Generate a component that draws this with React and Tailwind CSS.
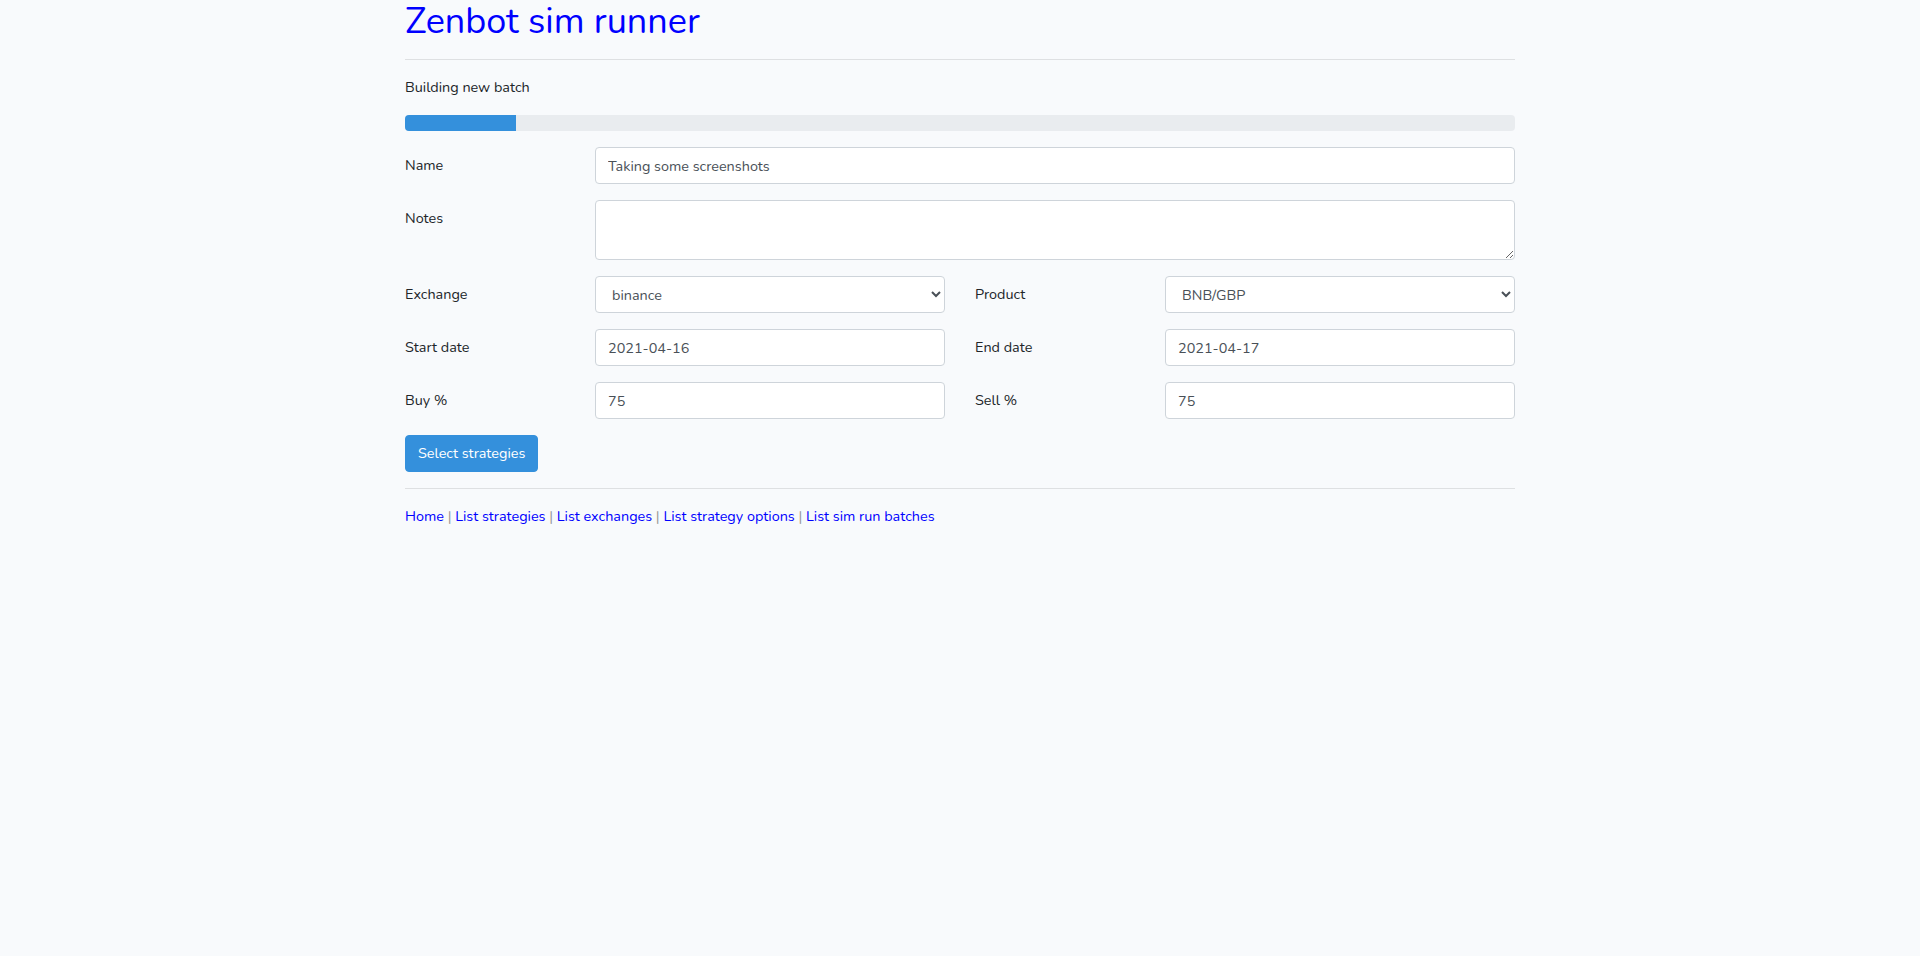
import React from "react";

const font = { fontFamily: "Nunito, Lato, 'Open Sans', sans-serif" };

function Label({ children }) {
  return (
    <label className="block pt-[7px] pb-[7px] text-[14.4px] leading-[1.6] text-[#212529]">
      {children}
    </label>
  );
}

const inputCls =
  "block w-full h-[37px] px-3 py-[6px] text-[14.4px] leading-[1.6] text-[#495057] bg-white border border-[#ced4da] rounded-[4px] outline-none";

export default function App() {
  return (
    <div className="min-h-[956px] bg-[#f8fafc] text-[#212529]" style={font}>
      <div className="w-[1110px] mx-auto">
        <h1 className="text-[36px] leading-[1.2] font-normal text-[#0000ff] m-0">Zenbot sim runner</h1>
        <hr className="mt-4 mb-4 border-0 border-t border-[rgba(0,0,0,0.1)]" />
        <p className="text-[14.4px] leading-[1.6] mb-4">Building new batch</p>
        <div className="h-4 w-full rounded-[4px] bg-[#e9ecef] overflow-hidden mb-4 flex">
          <div className="h-full w-[10%] bg-[#3490dc]" />
        </div>

        <div className="grid grid-cols-12 gap-x-[30px] gap-y-4">
          <div className="col-span-2"><Label>Name</Label></div>
          <div className="col-span-10">
            <input className={inputCls} defaultValue="Taking some screenshots" />
          </div>

          <div className="col-span-2"><Label>Notes</Label></div>
          <div className="col-span-10">
            <textarea rows={2} className="block w-full h-[60px] px-3 py-[6px] text-[14.4px] leading-[1.6] text-[#495057] bg-white border border-[#ced4da] rounded-[4px] outline-none" />
          </div>

          <div className="col-span-2"><Label>Exchange</Label></div>
          <div className="col-span-4">
            <select className={inputCls} defaultValue="binance">
              <option value="binance">binance</option>
            </select>
          </div>
          <div className="col-span-2"><Label>Product</Label></div>
          <div className="col-span-4">
            <select className={inputCls} defaultValue="BNB/GBP">
              <option value="BNB/GBP">BNB/GBP</option>
            </select>
          </div>

          <div className="col-span-2"><Label>Start date</Label></div>
          <div className="col-span-4">
            <input className={inputCls} defaultValue="2021-04-16" />
          </div>
          <div className="col-span-2"><Label>End date</Label></div>
          <div className="col-span-4">
            <input className={inputCls} defaultValue="2021-04-17" />
          </div>

          <div className="col-span-2"><Label>Buy %</Label></div>
          <div className="col-span-4">
            <input className={inputCls} defaultValue="75" />
          </div>
          <div className="col-span-2"><Label>Sell %</Label></div>
          <div className="col-span-4">
            <input className={inputCls} defaultValue="75" />
          </div>
        </div>

        <button className="mt-4 px-3 py-[6px] text-[14.4px] leading-[1.6] text-white bg-[#3490dc] border border-[#3490dc] rounded-[4px]">
          Select strategies
        </button>

        <hr className="mt-4 mb-4 border-0 border-t border-[rgba(0,0,0,0.1)]" />

        <div className="text-[14.4px] leading-[1.6]">
          <a className="text-[#0000ff]" href="#">Home</a>
          <span className="text-[#9a9a9a]"> | </span>
          <a className="text-[#0000ff]" href="#">List strategies</a>
          <span className="text-[#9a9a9a]"> | </span>
          <a className="text-[#0000ff]" href="#">List exchanges</a>
          <span className="text-[#9a9a9a]"> | </span>
          <a className="text-[#0000ff]" href="#">List strategy options</a>
          <span className="text-[#9a9a9a]"> | </span>
          <a className="text-[#0000ff]" href="#">List sim run batches</a>
        </div>
      </div>
    </div>
  );
}
